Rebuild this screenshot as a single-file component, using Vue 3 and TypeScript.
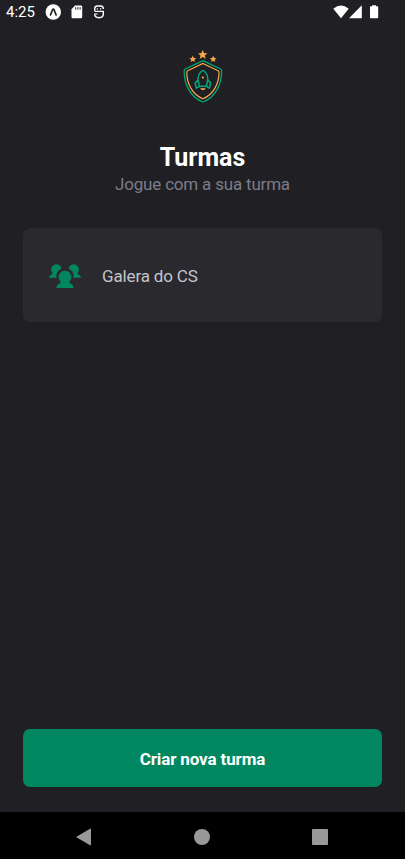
<script setup lang="ts">
import { ref } from 'vue'

interface Group {
  id: number
  name: string
}

const time = ref<string>('4:25')
const groups = ref<Group[]>([{ id: 1, name: 'Galera do CS' }])
</script>

<template>
  <div class="screen">
    <header class="status">
      <span class="time">{{ time }}</span>
      <svg class="expo" width="16" height="16" viewBox="0 0 16 16">
        <circle cx="8.3" cy="8" r="7.7" fill="#fff" />
        <path d="M5.5 10.9 7.6 5.6Q8.3 4.4 9 5.6L11.1 10.9" fill="none" stroke="#202024" stroke-width="1.6" stroke-linecap="round" stroke-linejoin="round" />
      </svg>
      <svg class="sd" width="12" height="14" viewBox="0 0 12 14">
        <path d="M4 .6H10Q11.2.6 11.2 1.8V12Q11.2 13.2 10 13.2H1.7Q.5 13.2.5 12V4.2Z" fill="#fff" />
        <path d="M4.7 2.2V4.6M6.9 2.2V4.6M9.1 2.2V4.6" stroke="#202024" stroke-width="1" />
      </svg>
      <svg class="debug" width="12" height="14" viewBox="0 0 12 14">
        <path d="M1.7 5.9V3.9Q1.7 1 4.2 1H7.8Q10.3 1 10.3 3.9M1.7 6.4H10.3V9.3Q10.3 12.7 6 12.7T1.7 9.3" fill="none" stroke="#fff" stroke-width="1.4" />
        <path d="M3.8 3.3H5V4.4H3.8ZM7 3.3H8.2V4.4H7ZM1 8.4H4.6V9.5H1Z" fill="#fff" />
      </svg>
      <span class="spacer"></span>
      <svg class="wifi" width="16" height="14" viewBox="0 0 16 14">
        <path d="M.3 3.7Q8-2.9 15.7 3.7L8 13.2Z" fill="#fff" />
      </svg>
      <svg class="signal" width="13" height="14" viewBox="0 0 13 14">
        <path d="M12.8.3V13.2H0Z" fill="#fff" />
      </svg>
      <svg class="battery" width="9" height="14" viewBox="0 0 9 14">
        <path d="M2.2.2H6V1.2H7.4Q8.2 1.2 8.2 2V12.4Q8.2 13.2 7.4 13.2H.8Q0 13.2 0 12.4V2Q0 1.2.8 1.2H2.2Z" fill="#fff" />
      </svg>
    </header>

    <main class="content">
      <svg class="logo" width="42" height="56" viewBox="0 0 42 56">
        <defs>
          <path id="star" d="M0-5 1.45-1.7 4.9-1.5 2.25.8 3.05 4.2 0 2.35-3.05 4.2-2.25.8-4.9-1.5-1.45-1.7Z" />
        </defs>
        <g fill="#fba94c">
          <use href="#star" transform="translate(20.7 5.8) scale(.96)" />
          <use href="#star" transform="translate(10.8 10.1) scale(.7)" />
          <use href="#star" transform="translate(31.2 10.1) scale(.7)" />
          <circle cx="20.9" cy="28.6" r="1.1" />
          <path d="M18.5 39.2H23.3V40.2H22.3V40.9H19.5V40.2H18.5Z" />
        </g>
        <path d="M20.9 11.6 38.6 20Q39.6 20.5 39.6 21.7C39.8 35 33.5 48.5 20.9 53C8.3 48.5 2 35 2.2 21.7Q2.2 20.5 3.2 20Z" fill="none" stroke="#00a878" stroke-width="1.3" />
        <path d="M20.9 14.4 36.1 21.7Q37 22.1 37 23.2C37.1 34.5 31.5 45.5 20.9 49.8C10.3 45.5 4.7 34.5 4.8 23.2Q4.8 22.1 5.7 21.7Z" fill="none" stroke="#fba94c" stroke-width="1.15" />
        <path d="M17.6 37.3Q14.4 28.5 17.8 24.1Q19.8 21.6 20.9 21.6Q22 21.6 24 24.1Q27.4 28.5 24.2 37.3ZM16.1 31 13.2 33.9 14.3 39.2 17.6 37.3M25.7 31 28.6 33.9 27.5 39.2 24.2 37.3" fill="none" stroke="#00a878" stroke-width="1.5" stroke-linejoin="round" />
      </svg>

      <h1>Turmas</h1>
      <p class="subtitle">Jogue com a sua turma</p>

      <button v-for="group in groups" :key="group.id" class="card" type="button">
        <svg width="32" height="24" viewBox="0 0 32 24" fill="#00875f">
          <path d="M12.3 4.7A5.1 5.1 0 1 0 3.6 8.9Q3.3 10.5 1.4 11.3Q0 12 0 13.8H7.6A8.3 8.3 0 0 1 12.3 4.7Z" />
          <path d="M19.7 4.7A5.1 5.1 0 1 1 28.4 8.9Q28.7 10.5 30.6 11.3Q32 12 32 13.8H24.4A8.3 8.3 0 0 0 19.7 4.7Z" />
          <path d="M16 6.7A6.3 6.3 0 0 1 20.4 17.5V18.5Q20.8 19.3 22.8 20.2Q24.6 21.3 24.6 24H7.4Q7.4 21.3 9.2 20.2Q11.2 19.3 11.6 18.5V17.5A6.3 6.3 0 0 1 16 6.7Z" />
        </svg>
        <span>{{ group.name }}</span>
      </button>

      <button class="create" type="button">Criar nova turma</button>
    </main>

    <nav class="navigation">
      <svg width="16" height="18" viewBox="0 0 16 18">
        <path d="M14.4 1.2 1.1 9 14.4 16.8Z" fill="#999" stroke="#999" stroke-width="1.2" stroke-linejoin="round" />
      </svg>
      <span class="home"></span>
      <span class="recent"></span>
    </nav>
  </div>
</template>

<style>
body {
  margin: 0;
  background: #202024;
}
</style>

<style scoped>
.screen {
  display: flex;
  flex-direction: column;
  height: 859px;
  background: #202024;
  color: #fff;
  font-family: Roboto, sans-serif;
}

.status {
  display: flex;
  align-items: center;
  box-sizing: border-box;
  height: 24px;
  padding: 0 26px 0 6px;
  flex: none;
}

.status svg {
  flex: none;
}

.time {
  width: 39px;
  font-size: 15px;
  line-height: 24px;
}

.sd {
  margin-left: 10px;
}

.debug {
  margin-left: 10px;
}

.spacer {
  flex: 1;
}

.signal {
  margin-left: 0;
}

.battery {
  margin-left: 8px;
}

.content {
  display: flex;
  flex: 1;
  flex-direction: column;
  align-items: center;
  padding: 25px 23px;
}

.logo {
  flex: none;
}

h1 {
  margin: 37px 0 0;
  font-size: 25px;
  line-height: 32px;
  font-weight: 700;
}

.subtitle {
  margin: 0;
  color: #7c7c8a;
  font-size: 17px;
  line-height: 21px;
  letter-spacing: -0.19px;
}

button {
  box-sizing: border-box;
  width: 100%;
  margin: 0;
  border: 0;
  border-radius: 7px;
  font-family: inherit;
}

.card {
  display: flex;
  align-items: center;
  gap: 21px;
  height: 94px;
  margin-top: 33px;
  padding: 2px 26px 0;
  background: #29292e;
  color: #c4c4cc;
  font-size: 17px;
  letter-spacing: -0.15px;
}

.create {
  height: 58px;
  margin-top: auto;
  padding: 2px 0 0;
  background: #00875f;
  color: #fff;
  font-size: 17px;
  font-weight: 700;
  letter-spacing: -0.12px;
}

.navigation {
  display: flex;
  align-items: center;
  box-sizing: border-box;
  height: 47px;
  padding: 3px 77px 0 76px;
  justify-content: space-between;
  background: #000;
  flex: none;
}

.home,
.recent {
  width: 16px;
  height: 16px;
  background: #999;
}

.home {
  border-radius: 50%;
}

.recent {
  border-radius: 1px;
}
</style>
